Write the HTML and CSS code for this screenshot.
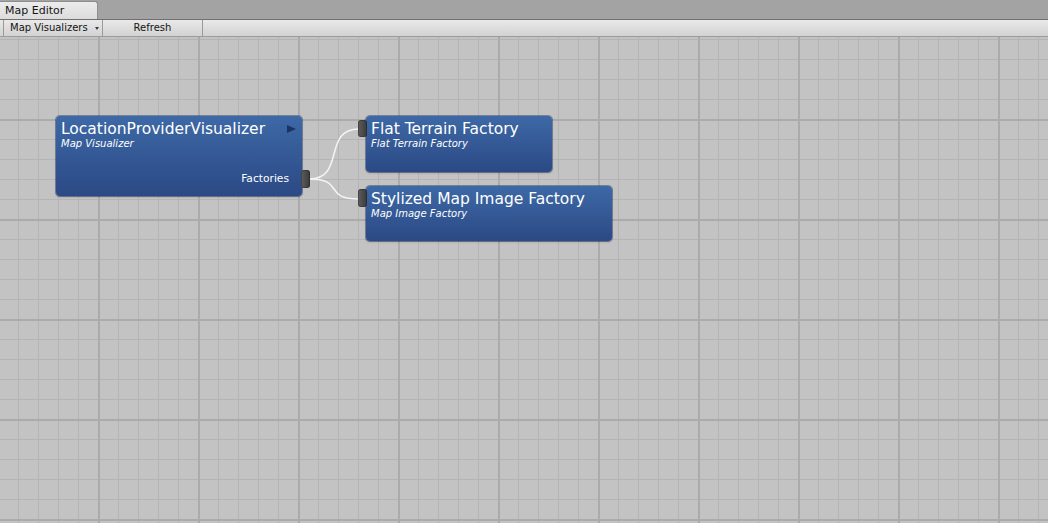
FILE: index.html
```html
<!DOCTYPE html>
<html>
<head>
<meta charset="utf-8">
<title>Map Editor</title>
<link rel="stylesheet" href="styles.css">
</head>
<body>
<div class="app">
  <div class="tabbar">
    <div class="tab">Map Editor</div>
  </div>
  <div class="toolbar">
    <div class="tb-btn tb-dropdown">Map Visualizers<span class="caret"></span></div>
    <div class="tb-btn tb-refresh">Refresh</div>
    <div class="tb-rest"></div>
  </div>
  <div class="canvas">
    <svg class="wires" width="1048" height="486" viewBox="0 0 1048 486">
      <path d="M309 142 C 346 142, 322 92, 359 92" />
      <path d="M309 142 C 346 142, 322 162, 359 162" />
    </svg>

    <div class="node node-visualizer">
      <div class="node-title">LocationProviderVisualizer</div>
      <div class="node-sub">Map Visualizer</div>
      <div class="node-out-label">Factories</div>
      <span class="play"></span>
      <span class="port port-out"></span>
    </div>

    <div class="node node-flat">
      <div class="node-title">Flat Terrain Factory</div>
      <div class="node-sub">Flat Terrain Factory</div>
      <span class="port port-in"></span>
    </div>

    <div class="node node-stylized">
      <div class="node-title">Stylized Map Image Factory</div>
      <div class="node-sub">Map Image Factory</div>
      <span class="port port-in"></span>
    </div>
  </div>
</div>
</body>
</html>
```

FILE: styles.css
```css
html, body {
  margin: 0;
  padding: 0;
}
body {
  width: 1048px;
  height: 523px;
  overflow: hidden;
  font-family: "DejaVu Sans", "Liberation Sans", sans-serif;
  background: #c2c2c2;
}
.app {
  display: flex;
  flex-direction: column;
  width: 1048px;
  height: 523px;
}

/* ---------- tab bar ---------- */
.tabbar {
  height: 19px;
  flex: none;
  background: #a3a3a3;
  display: flex;
  align-items: flex-end;
}
.tab {
  width: 92px;
  height: 17px;
  padding-left: 5px;
  font-size: 11px;
  line-height: 17px;
  color: #141414;
  background: linear-gradient(#ececec, #dcdcdc);
  border-top: 1px solid #8e8e8e;
  border-right: 1px solid #8e8e8e;
  border-top-right-radius: 3px;
}

/* ---------- toolbar ---------- */
.toolbar {
  height: 16px;
  flex: none;
  display: flex;
  padding-left: 3px;
  border-top: 1px solid #6f6f6f;
  border-bottom: 1px solid #9c9c9c;
  background: linear-gradient(#e9e9e9, #d2d2d2);
}
.tb-btn {
  font-size: 10px;
  line-height: 16px;
  color: #141414;
  border-left: 1px solid #9a9a9a;
  box-sizing: border-box;
}
.tb-dropdown {
  width: 99px;
  padding-left: 6px;
  position: relative;
}
.caret {
  position: absolute;
  left: 91px;
  top: 7px;
  width: 0;
  height: 0;
  border-left: 2.5px solid transparent;
  border-right: 2.5px solid transparent;
  border-top: 3px solid #3c3c3c;
}
.tb-refresh {
  width: 100px;
  text-align: center;
}
.tb-rest {
  flex: 1;
  border-left: 1px solid #9a9a9a;
}

/* ---------- canvas ---------- */
.canvas {
  flex: 1;
  position: relative;
  background-color: #c3c3c3;
  background-image:
    linear-gradient(90deg, #ababab 0 2px, transparent 2px),
    linear-gradient(180deg, #ababab 0 2px, transparent 2px),
    linear-gradient(90deg, #b4b4b4 0 1px, transparent 1px),
    linear-gradient(180deg, #b4b4b4 0 1px, transparent 1px);
  background-size: 100px 100px, 100px 100px, 20px 20px, 20px 20px;
  background-position: 98px 0, 0 82px, 18px 0, 0 2px;
  overflow: hidden;
}
.wires {
  position: absolute;
  left: 0;
  top: 0;
}
.wires path {
  fill: none;
  stroke: #f4f4f4;
  stroke-width: 1.5;
}

/* ---------- nodes ---------- */
.node {
  position: absolute;
  box-sizing: border-box;
  display: flex;
  flex-direction: column;
  padding: 4px 5px 0 5px;
  color: #ffffff;
  border-radius: 4px;
  background: linear-gradient(#3d69a6, #2b4985);
  box-shadow: 0 0 0 1px rgba(30, 52, 95, 0.45), 0 1px 2px rgba(0, 0, 0, 0.25);
}
.node-title {
  font-size: 15.5px;
  line-height: 18px;
  white-space: nowrap;
}
.node-sub {
  font-size: 10px;
  line-height: 12px;
  font-style: italic;
  white-space: nowrap;
}
.node-out-label {
  margin-top: auto;
  margin-bottom: 11px;
  padding-right: 8px;
  text-align: right;
  font-size: 10.7px;
  line-height: 13px;
}
.node-visualizer {
  left: 56px;
  top: 79px;
  width: 246px;
  height: 80px;
}
.node-flat {
  left: 366px;
  top: 79px;
  width: 186px;
  height: 56px;
}
.node-stylized {
  left: 366px;
  top: 149px;
  width: 246px;
  height: 55px;
}
.play {
  position: absolute;
  right: 6px;
  top: 9px;
  width: 0;
  height: 0;
  border-top: 4.5px solid transparent;
  border-bottom: 4.5px solid transparent;
  border-left: 9px solid #1c3463;
}
.port {
  position: absolute;
  width: 9px;
  height: 18px;
  border-radius: 3px;
  background: linear-gradient(90deg, #5e5e5e, #3a3a3a);
  box-shadow: inset 0 0 0 1px rgba(0, 0, 0, 0.25);
}
.port-out {
  left: 245px;
  top: 54px;
}
.port-in {
  left: -8px;
  top: 4px;
  height: 17px;
}
.node-stylized .port-in {
  top: 3px;
  height: 18px;
}
```
